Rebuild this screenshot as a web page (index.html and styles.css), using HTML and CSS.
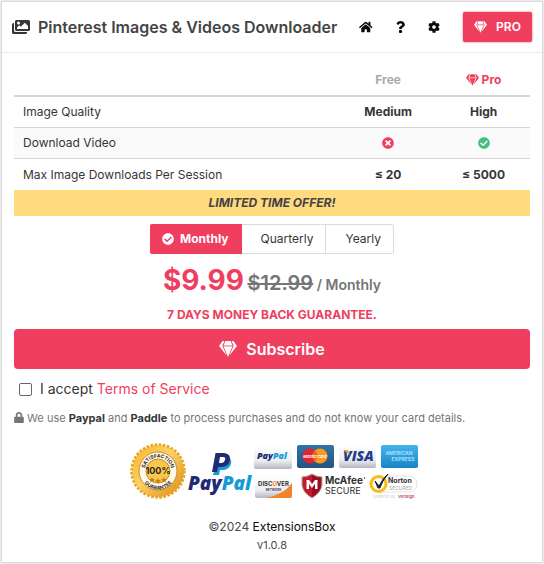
FILE: index.html
```html
<!DOCTYPE html>
<html lang="en">
<head>
<meta charset="utf-8">
<meta name="viewport" content="width=device-width, initial-scale=1">
<title>Pinterest Images &amp; Videos Downloader</title>
<link rel="stylesheet" href="styles.css">
</head>
<body>
<svg class="sprite" aria-hidden="true">
  <symbol id="gem" viewBox="0 0 18 16">
    <path d="M3.6 0H5.4L3.4 4.8 7.6 14.6 0 5z"/>
    <path d="M14.4 0H12.6L14.6 4.8 10.4 14.6 18 5z"/>
    <path d="M6.3 0H11.7L13.3 4.3H4.7z"/>
    <path d="M4.6 5.6H13.4L9 16z"/>
    <path opacity=".55" d="M4.5 4.3h9v1.3h-9z"/>
  </symbol>
  <symbol id="check" viewBox="0 0 512 512"><path d="M504 256c0 136.967-111.033 248-248 248S8 392.967 8 256 119.033 8 256 8s248 111.033 248 248zM227.314 387.314l184-184c6.248-6.248 6.248-16.379 0-22.627l-22.627-22.627c-6.248-6.249-16.379-6.249-22.628 0L216 308.118l-70.059-70.059c-6.248-6.248-16.379-6.248-22.628 0l-22.627 22.627c-6.248 6.248-6.248 16.379 0 22.627l104 104c6.249 6.249 16.379 6.249 22.628.001z"/></symbol>
</svg>
<div class="card">
  <header class="header">
    <svg class="logo" viewBox="0 0 18 14" aria-hidden="true">
      <path fill-rule="evenodd" d="M4.500 0H16.500A1.500 1.500 0 0 1 18 1.500V9.500A1.500 1.500 0 0 1 16.500 11H4.500A1.500 1.500 0 0 1 3 9.500V1.500A1.500 1.500 0 0 1 4.500 0ZM5 9H16V6L12.800 2.800 8.800 6.800 7.300 5.300 5 7.600ZM6.500 1.500A1.500 1.500 0 1 0 6.500 4.500 1.500 1.500 0 0 0 6.500 1.500Z"/>
      <path d="M0 4.500A1.500 1.500 0 0 1 1.500 3H2V10.500A1.500 1.500 0 0 0 3.500 12H15V12.500A1.500 1.500 0 0 1 13.500 14H1.500A1.500 1.500 0 0 1 0 12.500Z"/>
    </svg>
    <h1 class="title">Pinterest Images &amp; Videos Downloader</h1>
    <nav class="nav">
      <a href="#" aria-label="Home"><svg viewBox="0 0 576 512"><path d="M280.37 148.26L96 300.11V464a16 16 0 0 0 16 16l112.06-.29a16 16 0 0 0 15.92-16V368a16 16 0 0 1 16-16h64a16 16 0 0 1 16 16v95.64a16 16 0 0 0 16 16.05L464 480a16 16 0 0 0 16-16V300L295.67 148.26a12.19 12.19 0 0 0-15.3 0zM571.6 251.47L488 182.56V44.05a12 12 0 0 0-12-12h-56a12 12 0 0 0-12 12v72.61L318.47 43a48 48 0 0 0-61 0L4.34 251.47a12 12 0 0 0-1.6 16.9l25.5 31A12 12 0 0 0 45.15 301l235.22-193.74a12.19 12.19 0 0 1 15.3 0L530.9 301a12 12 0 0 0 16.9-1.6l25.5-31a12 12 0 0 0-1.7-16.93z"/></svg></a>
      <a href="#" aria-label="Help"><svg viewBox="0 0 384 512"><path d="M202.021 0C122.202 0 70.503 32.703 29.914 91.026c-7.363 10.58-5.093 25.086 5.178 32.874l43.138 32.709c10.373 7.865 25.132 6.026 33.253-4.148 25.049-31.381 43.63-49.449 82.757-49.449 30.764 0 68.816 19.799 68.816 49.631 0 22.552-18.617 34.134-48.993 51.164-35.423 19.86-82.299 44.576-82.299 106.405V320c0 13.255 10.745 24 24 24h72.471c13.255 0 24-10.745 24-24v-5.773c0-42.86 125.268-44.645 125.268-160.627C377.504 66.256 286.902 0 202.021 0zM192 373.459c-38.196 0-69.271 31.075-69.271 69.271 0 38.195 31.075 69.27 69.271 69.27s69.271-31.075 69.271-69.271-31.075-69.27-69.271-69.27z"/></svg></a>
      <a href="#" aria-label="Settings"><svg viewBox="0 0 512 512"><path d="M487.4 315.7l-42.6-24.6c4.3-23.2 4.3-47 0-70.2l42.6-24.6c4.9-2.8 7.1-8.6 5.5-14-11.1-35.6-30-67.8-54.7-94.6-3.8-4.1-10-5.1-14.8-2.3L380.8 110c-17.9-15.4-38.5-27.3-60.8-35.1V25.8c0-5.6-3.9-10.5-9.4-11.7-36.7-8.2-74.3-7.8-109.2 0-5.500 1.200-9.400 6.100-9.400 11.700V75c-22.200 7.900-42.800 19.800-60.800 35.100L88.700 85.500c-4.900-2.800-11-1.900-14.800 2.300-24.700 26.700-43.600 58.900-54.700 94.600-1.700 5.400.6 11.200 5.500 14L67.300 221c-4.300 23.200-4.300 47 0 70.200l-42.600 24.600c-4.900 2.800-7.100 8.600-5.500 14 11.100 35.600 30 67.800 54.700 94.600 3.800 4.100 10 5.100 14.800 2.300l42.600-24.600c17.900 15.400 38.500 27.300 60.800 35.100v49.200c0 5.600 3.900 10.500 9.400 11.700 36.700 8.200 74.300 7.800 109.200 0 5.500-1.200 9.400-6.100 9.400-11.700v-49.200c22.200-7.900 42.800-19.800 60.800-35.100l42.600 24.600c4.900 2.800 11 1.900 14.800-2.300 24.700-26.700 43.600-58.900 54.700-94.600 1.500-5.500-.7-11.300-5.600-14.100zM256 336c-44.100 0-80-35.900-80-80s35.900-80 80-80 80 35.900 80 80-35.900 80-80 80z"/></svg></a>
    </nav>
    <button class="pro-button" type="button"><svg class="gem-small" aria-hidden="true"><use href="#gem"/></svg>PRO</button>
  </header>

  <main class="content">
    <table class="plans">
      <thead>
        <tr><th class="feature"></th><th class="free" scope="col">Free</th><th class="pro" scope="col"><svg class="gem-small" aria-hidden="true"><use href="#gem"/></svg> Pro</th></tr>
      </thead>
      <tbody>
        <tr><td>Image Quality</td><td>Medium</td><td>High</td></tr>
        <tr class="striped"><td>Download Video</td>
          <td><svg class="status no" role="img" aria-label="No" viewBox="0 0 512 512"><path d="M256 8C119 8 8 119 8 256s111 248 248 248 248-111 248-248S393 8 256 8zm121.6 313.1c4.7 4.7 4.7 12.3 0 17L338 377.600c-4.700 4.700-12.300 4.700-17 0L256 312l-65.100 65.600c-4.700 4.700-12.300 4.700-17 0L134.400 338c-4.700-4.700-4.700-12.300 0-17l65.600-65-65.600-65.100c-4.700-4.700-4.700-12.300 0-17l39.600-39.600c4.700-4.700 12.300-4.700 17 0l65 65.700 65.100-65.600c4.700-4.700 12.300-4.700 17 0l39.600 39.600c4.700 4.700 4.700 12.300 0 17L312 256l65.600 65.100z"/></svg></td>
          <td><svg class="status yes" role="img" aria-label="Yes"><use href="#check"/></svg></td></tr>
        <tr><td>Max Image Downloads Per Session</td><td>≤ 20</td><td>≤ 5000</td></tr>
      </tbody>
    </table>
    <p class="offer">LIMITED TIME OFFER!</p>

    <div class="periods" role="group" aria-label="Billing period">
      <button class="period active" type="button" aria-pressed="true"><svg aria-hidden="true"><use href="#check"/></svg>Monthly</button>
      <button class="period" type="button" aria-pressed="false">Quarterly</button>
      <button class="period" type="button" aria-pressed="false">Yearly</button>
    </div>

    <p class="price"><strong>$9.99</strong> <s>$12.99</s> <span>/ Monthly</span></p>
    <p class="guarantee">7 DAYS MONEY BACK GUARANTEE.</p>
    <button class="subscribe" type="button"><svg class="gem-large" aria-hidden="true"><use href="#gem"/></svg>Subscribe</button>

    <div class="terms">
      <input type="checkbox" id="accept">
      <label for="accept">I accept <a href="#">Terms of Service</a></label>
    </div>
    <p class="secure"><svg viewBox="0 0 448 512" aria-hidden="true"><path d="M400 224h-24v-72C376 68.200 307.800 0 224 0S72 68.200 72 152v72H48c-26.500 0-48 21.500-48 48v192c0 26.500 21.500 48 48 48h352c26.500 0 48-21.500 48-48V272c0-26.500-21.500-48-48-48zm-104 0H152v-72c0-39.700 32.300-72 72-72s72 32.300 72 72v72z"/></svg> We use <b>Paypal</b> and <b>Paddle</b> to process purchases and do not know your card details.</p>

    <svg class="badges" viewBox="105 430 334 80" role="img" aria-label="Accepted payment methods and security seals">
      <defs>
        <linearGradient id="gold" x2="1" y2="1"><stop offset="0" stop-color="#f7b52c"/><stop offset=".45" stop-color="#fbd166"/><stop offset="1" stop-color="#d98a10"/></linearGradient>
        <linearGradient id="silver" x2="0" y2="1"><stop offset="0" stop-color="#fff"/><stop offset=".65" stop-color="#eceef2"/><stop offset="1" stop-color="#b4b7bf"/></linearGradient>
        <linearGradient id="navy" x2="0" y2="1"><stop offset="0" stop-color="#3273a8"/><stop offset="1" stop-color="#255382"/></linearGradient>
        <linearGradient id="sky" x2="0" y2="1"><stop offset="0" stop-color="#45b5ec"/><stop offset="1" stop-color="#1684c7"/></linearGradient>
        <path id="seal-top" d="M144.500 470A13.500 13.500 0 0 1 171.500 470"/>
        <path id="seal-bottom" d="M140.500 471A17.500 17.500 0 0 0 175.500 471"/>
      </defs>
      <!-- Satisfaction seal -->
      <circle cx="158" cy="470" r="26" fill="url(#gold)"/>
      <circle cx="158" cy="470" r="26.500" fill="none" stroke="#e9a31f" stroke-width="2.500" stroke-dasharray="2.600 1.560"/>
      <circle cx="158" cy="470" r="19" fill="#fffaf0" stroke="#d18b17"/>
      <circle cx="158" cy="470" r="12" fill="#f9c64e" stroke="#cf8a1b"/>
      <g class="seal-text"><text><textPath href="#seal-top" startOffset="50%">SATISFACTION</textPath></text><text><textPath href="#seal-bottom" startOffset="50%">GUARANTEE</textPath></text></g>
      <text class="seal-number" x="158" y="473">100%</text>
      <path d="M152 476l1 2h2l-1.500 1.500.5 2-2-1-2 1 .5-2-1.500-1.500h2zM158 477l1 2h2l-1.500 1.500.5 2-2-1-2 1 .5-2-1.500-1.500h2zM164 476l1 2h2l-1.500 1.500.5 2-2-1-2 1 .5-2-1.500-1.500h2z" fill="#c98212"/>
      <!-- PayPal -->
      <path d="M219 456h9q4 2 3 7-2 6-9 6h-2l-1 5h-6z" fill="#179bd7"/>
      <path d="M215.500 452h8.500q7 1 6 7-1 7-9 7h-3l-1 5h-5z" fill="#202b73"/>
      <path d="M220 456h3q3 0 2 3-1 3-4 3h-2z" fill="#fff"/>
      <text class="paypal" x="188" y="489">Pay<tspan class="cyan">Pal</tspan></text>
      <rect x="254" y="444" width="38" height="24" rx="2" fill="url(#silver)"/>
      <text class="paypal mini" x="257" y="458">Pay<tspan class="cyan">Pal</tspan></text>
      <!-- MasterCard -->
      <rect x="297" y="444" width="37" height="23" rx="2" fill="url(#navy)"/>
      <circle cx="310" cy="455" r="7.500" fill="#e8222b"/><circle cx="320" cy="455" r="7.500" fill="#f99b1c"/>
      <path d="M315 449.400a7.500 7.500 0 0 1 0 11.200 7.500 7.500 0 0 1 0-11.200" fill="#ee6324"/>
      <text class="mastercard" x="315" y="457">MasterCard</text>
      <!-- Visa -->
      <rect x="339" y="444" width="37" height="23" rx="2" fill="url(#silver)"/>
      <text class="visa" x="343" y="460">VISA</text><path d="M343 449h5l2 5z" fill="#f0a52b"/>
      <!-- American Express -->
      <rect x="381" y="444" width="37" height="23" rx="2" fill="url(#sky)"/>
      <g class="amex"><text x="399" y="454">AMERICAN</text><text x="403" y="460">EXPRESS</text></g>
      <!-- Discover -->
      <rect x="255" y="475" width="37" height="22" rx="2" fill="url(#silver)"/>
      <path d="M292 482Q285 493 266 497H290Q292 497 292 495z" fill="#f28327"/>
      <text class="discover" x="273.500" y="485">DISC<tspan fill="#f28327">O</tspan>VER</text>
      <text class="network" x="273.500" y="490">NETWORK</text>
      <!-- McAfee -->
      <path d="M302 476q5 0 10-3 5 3 10 3v8q-1 8-10 13-9-5-10-13z" fill="#c5182d" stroke="#a5a5a8"/>
      <path d="M312 474.500q4 2 9 2.300v7.200q-1 7-9 12z" fill="#980d22"/>
      <path d="M306.500 488v-9h2.500l3 4 3-4h2.500v9H315v-5l-3 4-3-4v5z" fill="#fff"/>
      <text class="mcafee" x="325" y="483">McAfee</text><text class="secure-word" x="325" y="493">SECURE</text>
      <circle cx="364.500" cy="477" r=".7" fill="#333"/>
      <!-- Norton -->
      <rect x="372" y="475" width="45" height="16" rx="8" fill="#fff" stroke="#e5e5e5"/>
      <circle cx="378.500" cy="483" r="7.500" fill="#fff" stroke="#f6bd18" stroke-width="3"/>
      <path d="M375 480l4 5q4-8 9-12-6 7-8 14h-2z" fill="#222" stroke="#222" stroke-width="1"/>
      <text class="norton" x="388" y="482">Norton</text><text class="secured" x="389" y="489">SECURED</text>
      <text class="powered" x="373" y="497">powered by</text><text class="verisign" x="398" y="497">VeriSign</text>
    </svg>
  </main>

  <footer class="footer">
    <p>©2024 <a href="#">ExtensionsBox</a></p>
    <p class="version">v1.0.8</p>
  </footer>
</div>
</body>
</html>
```
FILE: styles.css
```css
* { box-sizing: border-box; }
body {
  margin: 0;
  padding: 1px;
  background: #fff;
  color: #363636;
  font: 12px/18px Inter, "Liberation Sans", sans-serif;
}
h1, p { margin: 0; }
a { color: #f03e5f; text-decoration: none; }
button { font: inherit; color: inherit; cursor: pointer; }
svg { fill: currentColor; flex: none; }
.sprite { position: absolute; width: 0; height: 0; }

.card {
  border: 1px solid #dbdbdb;
  box-shadow: 0 0 2px #bbb;
  padding-bottom: 8px;
}
.header {
  display: flex;
  align-items: center;
  height: 51px;
  padding: 0 10px;
  border-bottom: 1px solid #e8ebee;
}
.logo { width: 18px; height: 14px; color: #363636; }
.title { flex: 1; margin-left: 8px; font-size: 16px; line-height: 24px; font-weight: 600; white-space: nowrap; color: #444; }
.nav { display: flex; margin-right: 12px; }
.nav a { display: flex; justify-content: center; width: 34px; color: #0a0a0a; }
.nav svg { height: 12px; }
.gem-small { width: 13px; height: 12px; }
.pro-button {
  display: flex;
  align-items: center;
  justify-content: center;
  gap: 9px;
  width: 69px;
  height: 30px;
  padding: 0;
  border: 0;
  border-radius: 2px;
  background: #f03e5f;
  box-shadow: 0 0 2px #f03e5f;
  color: #fff;
  font-weight: 600;
}

.content { display: flex; flex-direction: column; padding: 12px 12px 0; }
.plans { width: 100%; border-collapse: separate; border-spacing: 0; table-layout: fixed; }
.plans th { height: 32px; padding: 0; border-bottom: 2px solid #d6d6d6; font-weight: 700; }
.plans td { height: 31px; padding: 0; border-bottom: 1px solid #d6d6d6; text-align: center; font-weight: 700; }
.plans td:first-child { padding-left: 9px; text-align: left; font-weight: 400; }
.plans tr:last-child td { border-bottom: 0; }
.plans .free { width: 19%; color: #aaa; }
.plans .pro { width: 18%; color: #f03e5f; }
.plans svg { vertical-align: -2px; }
.striped { background: #fafafa; }
.status { width: 12px; height: 12px; }
.no { color: #f03e5f; }
.yes { color: #41c07f; }
.offer { padding: 4px; background: #ffda7e; text-align: center; font-style: italic; font-weight: 700; color: #444; }

.periods { display: flex; justify-content: center; margin-top: 8px; }
.period {
  display: flex;
  align-items: center;
  gap: 6px;
  height: 30px;
  padding: 0 12px 0 19px;
  border: 1px solid #dbdbdb;
  border-left: 0;
  background: #fff;
}
.period.active { padding: 0 12px; border-color: #f03e5f; border-radius: 2px 0 0 2px; background: #f03e5f; color: #fff; font-weight: 700; }
.period:last-child { border-radius: 0 2px 2px 0; }
.period svg { width: 12px; height: 12px; }

.price { margin-top: 8px; text-align: center; font-size: 14px; line-height: 36px; font-weight: 600; color: #757575; }
.price strong { font-size: 28px; font-weight: 700; color: #f03e5f; }
.price s { font-size: 20px; }
.guarantee { margin: 3px 0 5px; text-align: center; font-weight: 700; color: #f03e5f; }
.subscribe {
  display: flex;
  align-items: center;
  justify-content: center;
  gap: 9px;
  height: 40px;
  border: 0;
  border-radius: 4px;
  background: #f03e5f;
  color: #fff;
  font-size: 16px;
  font-weight: 600;
}
.gem-large { width: 18px; height: 16px; }

.terms { display: flex; align-items: center; gap: 8px; margin-top: 8px; padding-left: 5px; font-size: 14px; line-height: 24px; }
.terms input { appearance: none; width: 13px; height: 13px; margin: 0; border: 1px solid #666; border-radius: 2px; background: #fff; }
.terms input:checked { background: #f03e5f; }
.secure { margin-top: 8px; font-size: 11px; color: #757575; }
.secure svg { width: 10px; height: 11px; vertical-align: -1px; }
.secure b { color: #363636; font-weight: 700; }

.badges { align-self: center; width: 334px; max-width: 100%; margin-top: 4px; }
.badges text { font-family: Inter, sans-serif; }
.badges .seal-text text { font-size: 5px; font-weight: 700; fill: #2c2820; text-anchor: middle; }
.badges .seal-number { font-size: 9px; font-weight: 700; fill: #2c2820; text-anchor: middle; }
.badges .paypal { font-family: "Open Sans", sans-serif; font-size: 19px; font-weight: 800; font-style: italic; fill: #202b73; }
.badges .mini { font-size: 9px; }
.badges .cyan { fill: #179bd7; }
.badges .mastercard { font-size: 4px; font-weight: 700; font-style: italic; fill: #fff; text-anchor: middle; }
.badges .visa { font-family: "Open Sans", sans-serif; font-size: 14px; font-weight: 800; font-style: italic; fill: #213c8f; }
.badges .amex text { font-size: 5px; font-weight: 700; fill: #a8e0fa; text-anchor: middle; }
.badges .discover { font-size: 6px; font-weight: 700; fill: #333; text-anchor: middle; }
.badges .network { font-size: 3px; font-weight: 700; fill: #444; text-anchor: middle; }
.badges .mcafee { font-size: 10px; font-weight: 700; fill: #303030; }
.badges .secure-word { font-size: 9px; fill: #303030; }
.badges .norton { font-size: 7px; font-weight: 700; fill: #333; }
.badges .secured { font-size: 5px; fill: #aaa; }
.badges .powered { font-size: 4px; fill: #ccc; }
.badges .verisign { font-size: 4px; font-weight: 700; fill: #c6596b; }

.footer { margin-top: 7px; text-align: center; color: #4a4a4a; }
.footer a { color: #0a0a0a; }
.version { font-size: 11px; }
```
